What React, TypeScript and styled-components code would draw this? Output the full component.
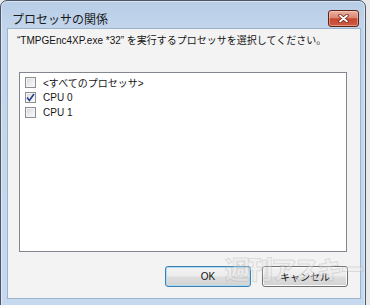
import React from 'react'
import styled, { createGlobalStyle } from 'styled-components'

const GlobalStyle = createGlobalStyle`
  html, body {
    margin: 0;
    padding: 0;
    background: #e9e9e9;
    overflow: hidden;
  }
  body {
    font-family: "Liberation Sans", "Noto Sans CJK JP", sans-serif;
  }
`

const Window = styled.div`
  position: relative;
  width: 366px;
  height: 312px;
  box-sizing: border-box;
  border: 1px solid #4b5666;
  border-radius: 7px 7px 0 0;
  background: linear-gradient(180deg, #b8cee7 0px, #c2d5eb 28px, #c6d9ee 100%);
  box-shadow: inset 0 0 0 1px rgba(255, 255, 255, 0.45);
  display: flex;
  flex-direction: column;
`

const TitleBar = styled.div`
  height: 27px;
  box-sizing: border-box;
  padding: 9px 6px 0 11px;
  display: flex;
  align-items: flex-start;
  justify-content: space-between;
`

const Title = styled.span`
  font-family: "Noto Sans CJK JP", sans-serif;
  font-size: 12px;
  line-height: 17px;
  color: #1b1b1b;
`

const CloseButton = styled.div`
  width: 31px;
  height: 17px;
  box-sizing: border-box;
  border: 1px solid #5e2418;
  border-radius: 3px;
  background: linear-gradient(180deg, #eab2a3 0%, #dd8670 45%, #c6472f 52%, #cf5d41 100%);
  box-shadow: inset 0 0 0 1px rgba(255, 220, 210, 0.45);
  display: flex;
  align-items: center;
  justify-content: center;
`

const Frame = styled.div`
  flex: 1;
  padding: 0 4px 6px 6px;
  display: flex;
`

const Client = styled.div`
  position: relative;
  flex: none;
  width: 100%;
  height: 271px;
  box-sizing: border-box;
  border: 1px solid #9db2cb;
  background: #f3f3f3;
  display: flex;
  flex-direction: column;
`

const Instruction = styled.div`
  padding: 5px 0 0 9px;
  font-size: 10px;
  line-height: 14px;
  color: #141414;
  white-space: nowrap;
`

const ListBox = styled.div`
  margin: 24px 0 0 11px;
  width: 328px;
  height: 180px;
  box-sizing: border-box;
  border: 1px solid #82878f;
  background: #ffffff;
  padding: 2px 0 0 5px;
  display: flex;
  flex-direction: column;
`

const Item = styled.label`
  height: 15px;
  display: flex;
  align-items: center;
  gap: 7px;
  font-size: 10px;
  color: #151515;
`

const Box = styled.span`
  width: 11px;
  height: 11px;
  box-sizing: border-box;
  border: 1px solid #8e8f8f;
  background: linear-gradient(135deg, #d2d4d8 0%, #eeeff1 60%, #fbfbfb 100%);
  box-shadow: inset 0 0 0 1px #f4f4f4;
  display: flex;
  align-items: center;
  justify-content: center;
`

const ButtonRow = styled.div`
  margin-top: 14px;
  padding-right: 12px;
  display: flex;
  justify-content: flex-end;
  gap: 11px;
`

const Button = styled.div<{ $default?: boolean }>`
  position: relative;
  z-index: 1;
  width: 86px;
  height: 21px;
  box-sizing: border-box;
  border: 1px solid ${({ $default }) => ($default ? '#3c7fb1' : '#707070')};
  border-radius: 3px;
  background: linear-gradient(180deg, #f3f3f3 0%, #ececec 48%, #dedede 52%, #d2d2d2 100%);
  box-shadow: inset 0 0 0 1px ${({ $default }) => ($default ? '#a9dcf5' : '#fbfbfb')};
  font-family: "Liberation Sans", "Noto Sans CJK JP", sans-serif;
  font-size: 10px;
  color: #111;
  display: flex;
  align-items: center;
  justify-content: center;
`

const Watermark = styled.div`
  position: absolute;
  z-index: 2;
  left: 217px;
  top: 227px;
  font-family: "Noto Sans CJK JP", sans-serif;
  font-weight: 900;
  font-size: 25px;
  line-height: 1;
  letter-spacing: -2px;
  color: rgba(235, 235, 235, 0.35);
  -webkit-text-stroke: 1px rgba(160, 160, 160, 0.3);
  pointer-events: none;
  white-space: nowrap;
`

const Check = () => (
  <svg width="9" height="9" viewBox="0 0 9 9">
    <path d="M1 4.6 L3.4 7.4 L8 1" fill="none" stroke="#233f8c" strokeWidth="1.6" />
  </svg>
)

const CloseX = () => (
  <svg width="11" height="9" viewBox="0 0 11 9">
    <path d="M2 1.5 L9 7.5 M9 1.5 L2 7.5" stroke="#6a2518" strokeWidth="3.4" strokeLinecap="round" />
    <path d="M2 1.5 L9 7.5 M9 1.5 L2 7.5" stroke="#ffffff" strokeWidth="1.8" strokeLinecap="round" />
  </svg>
)

const items = [
  { label: '<すべてのプロセッサ>', checked: false },
  { label: 'CPU 0', checked: true },
  { label: 'CPU 1', checked: false },
]

export default function App() {
  return (
    <>
      <GlobalStyle />
      <Window>
        <TitleBar>
          <Title>プロセッサの関係</Title>
          <CloseButton><CloseX /></CloseButton>
        </TitleBar>
        <Frame>
          <Client>
            <Instruction>“TMPGEnc4XP.exe *32” を実行するプロセッサを選択してください。</Instruction>
            <ListBox>
              {items.map((it) => (
                <Item key={it.label}>
                  <Box>{it.checked && <Check />}</Box>
                  {it.label}
                </Item>
              ))}
            </ListBox>
            <ButtonRow>
              <Button $default>OK</Button>
              <Button>キャンセル</Button>
            </ButtonRow>
            <Watermark>週刊アスキー</Watermark>
          </Client>
        </Frame>
      </Window>
    </>
  )
}
